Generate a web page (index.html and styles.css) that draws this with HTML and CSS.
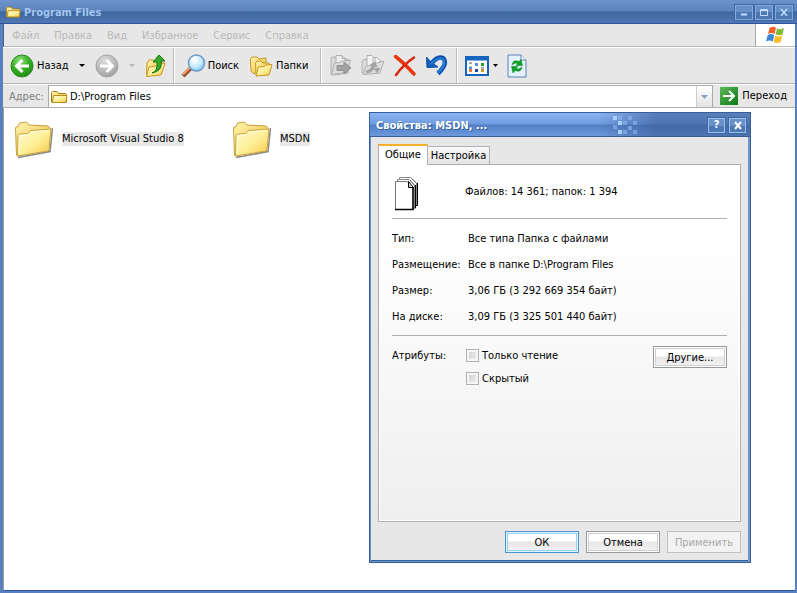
FILE: index.html
```html
<!DOCTYPE html>
<html lang="ru">
<head>
<meta charset="utf-8">
<title>Program Files</title>
<link rel="stylesheet" href="styles.css">
</head>
<body>
<svg class="defs" aria-hidden="true">
  <defs>
    <linearGradient id="gold" x1="0" y1="0" x2="1" y2="1"><stop offset="0" stop-color="#fffbd0"/><stop offset=".5" stop-color="#fff09a"/><stop offset="1" stop-color="#f2c846"/></linearGradient>
    <linearGradient id="goldBack" x1="0" y1="0" x2="1" y2="1"><stop offset="0" stop-color="#fff6b0"/><stop offset="1" stop-color="#e8b838"/></linearGradient>
    <radialGradient id="green" cx=".4" cy=".25" r=".8"><stop offset="0" stop-color="#8fe07a"/><stop offset=".5" stop-color="#3cb028"/><stop offset="1" stop-color="#1c8a14"/></radialGradient>
    <radialGradient id="grey" cx=".4" cy=".25" r=".8"><stop offset="0" stop-color="#dcdcdc"/><stop offset=".6" stop-color="#b8b8b8"/><stop offset="1" stop-color="#a0a0a0"/></radialGradient>
    <radialGradient id="lens" cx=".4" cy=".35" r=".7"><stop offset="0" stop-color="#fff"/><stop offset=".6" stop-color="#c4e8fc"/><stop offset="1" stop-color="#7cbcf0"/></radialGradient>
    <linearGradient id="goGreen" x1="0" y1="0" x2="1" y2="1"><stop offset="0" stop-color="#5cb85a"/><stop offset="1" stop-color="#0c7814"/></linearGradient>
    <symbol id="folder" viewBox="0 0 18 14">
      <path d="M1.500 12V2.500L2.500 1.500H7L8.500 3.500H15.500L16.500 4.500V12.500H2Z" fill="url(#goldBack)" stroke="#a87c14"/>
      <path d="M2.500 12.500L3.500 5.500H17L16 12.500Z" fill="url(#gold)" stroke="#b88c20"/>
    </symbol>
    <symbol id="bigfolder" viewBox="0 0 38 38">
      <path d="M3 36.500L35 30.500L37.500 7" fill="none" stroke="#555" stroke-width="1.500" opacity=".7"/>
      <path d="M1.500 34L.5 6.500L3 5.500L4.500 2L11.500 1L14 4L33 5L35.500 7.500L33 29L2.500 35Z" fill="url(#goldBack)" stroke="#c8a040"/>
      <path d="M2.500 35L3 14.500L4.500 13L12.500 12.500L16 9.500L36 8L34 29L33 30Z" fill="url(#gold)" stroke="#cca43c"/>
      <path d="M4 33L4.500 14.500L13 14L16.500 11L34 9.500" fill="none" stroke="#fffce0"/>
    </symbol>
  </defs>
</svg>
<div class="window">
  <header class="titlebar">
    <svg class="title-icon" viewBox="0 0 18 14"><use href="#folder"/></svg>
    <h1>Program Files</h1>
    <button class="caption-button" aria-label="Свернуть"><svg viewBox="0 0 16 13"><path d="M5 8.500H11" stroke="#c4dcff" stroke-width="2"/></svg></button>
    <button class="caption-button" aria-label="Развернуть"><svg viewBox="0 0 16 13"><path d="M5 3.500H11.500V9.500H4.500V3.500M4 4.500H12" stroke="#c4dcff" fill="none"/></svg></button>
    <button class="caption-button" aria-label="Закрыть"><svg viewBox="0 0 16 13"><path d="M5 3L11 10M11 3L5 10" stroke="#c4dcff" stroke-width="1.500"/></svg></button>
  </header>
  <nav class="menubar">
    <button>Файл</button><button>Правка</button><button>Вид</button><button>Избранное</button><button>Сервис</button><button>Справка</button>
    <div class="brand"><svg width="20" height="20" viewBox="0 0 20 20">
      <path d="M3.500 3Q7 .5 10 2.800L8.500 9Q5.500 7 2 9Z" fill="#f0642c"/><path d="M11 3.500Q14.500 5 18 3L16.500 9.500Q13 11 9.500 9.500Z" fill="#80bc34"/>
      <path d="M1.700 10Q5 8 8.200 10L6.800 16.500Q3.500 14.500 0 16.500Z" fill="#3c84d4"/><path d="M9.200 10.600Q13 12.400 16.200 10.600L14.600 17Q11 19 7.700 17Z" fill="#f8bc28"/>
    </svg></div>
  </nav>
  <div class="toolbar">
    <button class="tool"><svg width="24" height="24" viewBox="0 0 24 24"><circle cx="12" cy="12" r="11" fill="url(#green)" stroke="#2c8a24"/><path d="M19 12H7M12.500 6L6.500 12L12.500 18" fill="none" stroke="#fff" stroke-width="3"/></svg><span>Назад</span></button>
    <button class="drop" aria-label="История назад"><svg width="6" height="3" viewBox="0 0 6 3"><path d="M0 0H6L3 3Z" fill="#000"/></svg></button>
    <button class="tool" aria-label="Вперед" disabled><svg width="24" height="24" viewBox="0 0 24 24"><circle cx="12" cy="12" r="11" fill="url(#grey)" stroke="#a4a4a4"/><path d="M5 12H17M11.500 6L17.500 12L11.500 18" fill="none" stroke="#fff" stroke-width="3"/></svg></button>
    <button class="drop" aria-label="История вперед" disabled><svg width="6" height="3" viewBox="0 0 6 3"><path d="M0 0H6L3 3Z" fill="#b8b8b8"/></svg></button>
    <button class="tool" aria-label="Вверх"><svg width="21" height="24" viewBox="0 0 21 24"><path d="M1.500 22L2 9L4 6H8L10 8L17 6.500V18Z" fill="url(#goldBack)" stroke="#c89820"/><path d="M1.500 22.500L4 13L11 12L13 10L20 9L16 21Z" fill="url(#gold)" stroke="#c89820"/><path d="M7 19Q13 17 12 8H8L14 1L20 7H16Q18 17 7 19Z" fill="#38a828" stroke="#187818"/></svg></button>
    <i class="separator"></i>
    <button class="tool search"><svg width="25" height="24" viewBox="0 0 25 24"><path d="M2 22L10 14" stroke="#945030" stroke-width="4"/><path d="M2 20.500L9 13.500" stroke="#f0a070" stroke-width="2"/><circle cx="15.500" cy="9" r="8" fill="url(#lens)" stroke="#6c9ccc" stroke-width="1.500"/><path d="M10 8Q11 4 15 3.500" fill="none" stroke="#fff" stroke-width="2"/></svg><span>Поиск</span></button>
    <button class="tool folders"><svg width="24" height="24" viewBox="0 0 24 24"><path d="M2 17L1.500 5L3 3H8L10 5L17 4V9L5 20Z" fill="url(#goldBack)" stroke="#c89820"/><path d="M7 21L6.500 9L8 7H12L14 9H20V20Z" fill="url(#goldBack)" stroke="#c89820"/><path d="M7 22L9.500 13L15 12.500L17 11L23 10.500L20 21Z" fill="url(#gold)" stroke="#c89820"/></svg><span>Папки</span></button>
    <i class="separator edit-separator"></i>
    <button class="tool" aria-label="Переместить" disabled><svg width="22" height="24" viewBox="0 0 22 24"><path d="M1 20.500V4L2 3H5L7 5H18V19L4 21Z" fill="#d8d8d8" stroke="#b0b0b0"/><path d="M6 1.500H12L15 4.500V16H6Z" fill="#efefef" stroke="#b0b0b0"/><path d="M12 1.500V4.500H15" fill="none" stroke="#b0b0b0"/><path d="M1.500 20.500L4.500 9L10 8.500L12 7L20.500 6L17 18.500Z" fill="#dcdcdc" stroke="#b0b0b0"/><path d="M7 11.500H14V8L21 14L14 20V16.500H7Z" fill="#a2a2a2" stroke="#909090"/></svg></button>
    <button class="tool copy" aria-label="Копировать" disabled><svg width="24" height="24" viewBox="0 0 24 24"><path d="M1 19V7L3 5.500H7L9 7H20L18 19Z" fill="#dadada" stroke="#b0b0b0"/><path d="M6 1.500H11L14 4.500V14H6ZM12 3.500H16L19 6.500V15H12Z" fill="#f2f2f2" stroke="#b0b0b0"/><path d="M2 20.500L5 12L10 11.500L12 10L23 7L19 19Z" fill="#dedede" stroke="#b0b0b0"/><path d="M5 17Q10 16 11 12L9 11L14 8L16 13L14 12.500Q12 18 6 19ZM13 15L19 14L16 19" fill="#a4a4a4" stroke="#999" stroke-width=".6"/></svg></button>
    <button class="tool delete" aria-label="Удалить"><svg width="24" height="24" viewBox="0 0 24 24"><path d="M2.500 2.500Q11 9 21 20" fill="none" stroke="#e83810" stroke-width="3.500" stroke-linecap="round"/><path d="M21 3.500Q10 11 3 21" fill="none" stroke="#d8280c" stroke-width="2.500" stroke-linecap="round"/></svg></button>
    <button class="tool undo" aria-label="Отменить"><svg width="24" height="24" viewBox="0 0 24 24"><path d="M6 10Q13 1 18.500 4.500Q23 10 13 19.500" fill="none" stroke="#0c50ac" stroke-width="4.500"/><path d="M1.500 3L2 13.500L13 13L9.500 10.500L5 7Z" fill="#1260bc" stroke="#0c50ac"/><path d="M6 10Q13 2 18 5Q22 10 13 19" fill="none" stroke="#2480d8" stroke-width="2"/></svg></button>
    <i class="separator"></i>
    <button class="tool" aria-label="Вид"><svg width="24" height="20" viewBox="0 0 24 20"><rect x="1" y="1" width="22" height="18" fill="#fff" stroke="#1464c0" stroke-width="2"/><path d="M1 2.500H23" stroke="#1464c0" stroke-width="4"/><path d="M4 7H7M16 12H19" stroke="#a8a8a8" stroke-width="2"/><path d="M10 8.500H13M4 12H7" stroke="#5c90d8" stroke-width="3"/><path d="M16 8.500H19" stroke="#24a030" stroke-width="3"/><path d="M4 14.500H7" stroke="#f07840" stroke-width="3"/><path d="M10 14.500H13" stroke="#1848a8" stroke-width="3"/><path d="M16 14.500H19" stroke="#c0a020" stroke-width="3"/></svg></button>
    <button class="drop view-drop" aria-label="Варианты вида"><svg width="5" height="3" viewBox="0 0 5 3"><path d="M0 0H5L2.500 3Z" fill="#000"/></svg></button>
    <button class="tool" aria-label="Обновить"><svg width="20" height="24" viewBox="0 0 20 24"><path d="M1 1H14L19 6V23H1Z" fill="#e4f2ff" stroke="#5c80b4"/><path d="M14 1V6H19" fill="#fff" stroke="#5c80b4"/><path d="M5 11Q6 5 12 7.500L14 5.500L15.500 11.500H9L11 9.500Q8 8 5 11ZM15 13Q14 19 8 16.500L6 19L4.500 12.500H11L9 14.500Q12 16 15 13Z" fill="#0ca020" stroke="#088418" stroke-width=".5"/></svg></button>
  </div>
  <div class="address">
    <label for="path">Адрес:</label>
    <div class="combo">
      <svg width="18" height="14" viewBox="0 0 18 14"><use href="#folder"/></svg>
      <input id="path" type="text" value="D:\Program Files">
      <button aria-label="Список адресов"><svg width="7" height="4" viewBox="0 0 7 4"><path d="M0 0H7L3.500 4Z" fill="#88a4bc"/></svg></button>
    </div>
    <button class="go"><svg width="18" height="18" viewBox="0 0 18 18"><rect width="18" height="18" fill="url(#goGreen)"/><path d="M3 9H14M9 4L14 9L9 14" fill="none" stroke="#fff" stroke-width="2"/></svg><span>Переход</span></button>
  </div>
  <main class="content">
    <a class="item" href="#vs"><svg width="38" height="38" viewBox="0 0 38 38"><use href="#bigfolder"/></svg><span>Microsoft Visual Studio 8</span></a>
    <a class="item" href="#msdn"><svg width="38" height="38" viewBox="0 0 38 38"><use href="#bigfolder"/></svg><span>MSDN</span></a>
  </main>
</div>

<section class="dialog" role="dialog" aria-labelledby="dialog-title">
  <header class="dialog-title">
    <h2 id="dialog-title">Свойства: MSDN, ...</h2>
    <svg class="pixels" width="25" height="20" viewBox="0 0 25 20"><path d="M0 1h4v4h-4zM5 6h4v4h-4zM5 15h4v4h-4z" fill="#a8d0ff"/><path d="M5 1h4v4h-4zM15 1h4v4h-4zM10 6h4v4h-4zM20 6h4v4h-4zM0 10h4v4h-4zM15 11h4v4h-4zM10 15h4v4h-4zM20 15h4v4h-4z" fill="#8cb4ec" opacity=".65"/></svg>
    <button class="caption-button" aria-label="Справка"><b>?</b></button>
    <button class="caption-button" aria-label="Закрыть"><svg viewBox="0 0 16 13"><path d="M5 3L11 10M11 3L5 10" stroke="#fff" stroke-width="2"/></svg></button>
  </header>
  <div class="dialog-body">
    <div class="tabs" role="tablist">
      <button class="tab active" role="tab" aria-selected="true">Общие</button>
      <button class="tab" role="tab" aria-selected="false">Настройка</button>
    </div>
    <div class="panel" role="tabpanel">
      <div class="summary">
        <svg width="26" height="34" viewBox="0 0 26 34"><path d="M5.500 29V.5H16.500L22.500 6V28.500" fill="#fff" stroke="#888"/><path d="M23.500 6V28.500H21" fill="none" stroke="#000"/><path d="M3.500 31V2.500H15L20.500 8V30.500" fill="#fff" stroke="#888"/><path d="M21.500 8V31H19" fill="none" stroke="#000"/><path d="M1.500 32.500V4.500H13L19 11V32.500Z" fill="#fff" stroke="#777"/><path d="M19 10V32.500H1" fill="none" stroke="#000" stroke-width="1.500"/><path d="M14.500 4.500V10.500H19.500Z" fill="#ccc" stroke="#000"/><path d="M16 3L21 9M18 1.500L23 7" stroke="#777"/></svg>
        <span>Файлов: 14 361; папок: 1 394</span>
      </div>
      <dl class="facts">
        <dt>Тип:</dt><dd>Все типа Папка с файлами</dd>
        <dt>Размещение:</dt><dd>Все в папке D:\Program Files</dd>
        <dt>Размер:</dt><dd>3,06 ГБ (3 292 669 354 байт)</dd>
        <dt>На диске:</dt><dd>3,09 ГБ (3 325 501 440 байт)</dd>
      </dl>
      <div class="attributes">
        <span class="attributes-label">Атрибуты:</span>
        <div class="checks">
          <label><input type="checkbox"><span>Только чтение</span></label>
          <label><input type="checkbox"><span>Скрытый</span></label>
        </div>
        <button class="push">Другие...</button>
      </div>
    </div>
    <footer class="actions">
      <button class="push primary">ОК</button>
      <button class="push">Отмена</button>
      <button class="push" disabled>Применить</button>
    </footer>
  </div>
</section>
</body>
</html>
```
FILE: styles.css
```css
* { box-sizing: border-box; }
body {
  margin: 0;
  font: 11px/14px "DejaVu Sans Condensed", "DejaVu Sans", sans-serif;
  color: #000;
}
button, input { font: inherit; color: inherit; }
button { margin: 0; padding: 0; border: 0; background: none; white-space: nowrap; }
svg { display: block; flex: none; }
.defs { position: absolute; width: 0; height: 0; }
h1, h2 { margin: 0; flex: 1; font-size: 11px; line-height: 14px; font-family: "DejaVu Sans Condensed", "DejaVu Sans", sans-serif; }

.window {
  min-height: 100vh;
  display: flex;
  flex-direction: column;
  border: solid #5880c0;
  border-width: 0 2px 2px 3px;
  background: #fff;
}
.titlebar {
  display: flex;
  align-items: center;
  gap: 2px;
  height: 24px;
  margin: 0 -2px 0 -3px;
  padding: 0 4px 0 5px;
  background: linear-gradient(#6c94cc, #5a82bc 11px, #3c669f 12px, #5078b4 23px, #2c559c 23px);
}
.title-icon { width: 16px; height: 14px; }
.titlebar h1 { padding: 2px 0 0 1px; color: #a4c4f0; }
.caption-button {
  display: flex;
  align-items: center;
  justify-content: center;
  width: 18px;
  height: 15px;
  border: 1px solid #a0c0ec;
  outline: 1px solid #3c68a8;
  background: linear-gradient(#6890c8 50%, #4c78b4 50%);
  color: #fff;
}
.titlebar .caption-button { border-color: #86a8d8; }
.caption-button svg { width: 16px; height: 13px; }

.menubar {
  display: flex;
  align-items: center;
  gap: 15px;
  height: 23px;
  padding-left: 8px;
  border-left: 1px solid #44608c;
  border-bottom: 1px solid #b8b8b8;
  background: #e7e7e7;
  color: #b9b9b9;
}
.menubar button { padding-top: 2px; }
.brand {
  display: flex;
  align-items: center;
  justify-content: center;
  align-self: stretch;
  width: 40px;
  margin-left: auto;
  border-left: 1px solid #a8a8a8;
  background: #fff;
}
.toolbar {
  display: flex;
  align-items: center;
  height: 37px;
  padding-left: 7px;
  border-top: 1px solid #fff;
  border-bottom: 1px solid #b4b4b4;
  background: #e7e7e7;
}
.tool { display: flex; align-items: center; gap: 3px; }
.drop { display: flex; justify-content: center; width: 26px; }
.separator { align-self: stretch; width: 2px; margin: 0 7px; border-left: 1px solid #bbb; border-right: 1px solid #fff; }
.search { margin-left: -1px; gap: 2px; }
.folders { margin-left: 10px; }
.edit-separator { margin: 0 8px 0 12px; }
.copy { margin-left: 9px; }
.delete, .undo { margin-left: 8px; }
.view-drop { width: 18px; padding-right: 5px; }

.address {
  display: flex;
  align-items: center;
  height: 24px;
  border-top: 1px solid #fff;
  border-bottom: 1px solid #b0b0b0;
  background: #e7e7e7;
}
.address label { width: 45px; padding: 1px 0 0 6px; color: #808080; }
.combo { display: flex; flex: 1; align-items: center; align-self: stretch; min-width: 0; border: 1px solid #aaa; border-width: 1px 1px 0; background: #fff; }
.combo svg { margin-left: 1px; }
.combo input { flex: 1; min-width: 0; padding: 1px 2px 0; border: 0; outline: 0; background: none; }
.combo button { display: flex; align-items: center; justify-content: center; align-self: stretch; width: 16px; border-left: 1px solid #ccc; background: linear-gradient(#fff, #e4e4e4); }
.combo button svg { margin: 0; }
.go { display: flex; align-items: center; gap: 4px; padding: 0 8px 0 7px; }

.content { display: flex; flex: 1; align-items: flex-start; padding: 13px 11px; border-left: 1px solid #a0a0a0; border-bottom: 1px solid #2c559c; }
.item { display: flex; align-items: center; gap: 9px; width: 218px; color: #000; text-decoration: none; }
.item span { margin-bottom: 2px; background: #e9e9e9; }

.dialog {
  position: absolute;
  left: 369px;
  top: 112px;
  width: 382px;
  border: 1px solid #345f9c;
  background: #6c94cc;
}
.dialog-title {
  display: flex;
  align-items: center;
  gap: 4px;
  height: 24px;
  padding: 0 4px 0 6px;
  background:
    linear-gradient(90deg, transparent 60%, rgb(56 92 148 / 60%) 75%),
    linear-gradient(#8cb4f0, #6e9ce0 11px, #527fc4 12px, #6c98dc 23px, #345f9c 23px);
}
.dialog-title h2 { padding-top: 1px; color: #fff; text-shadow: 1px 1px #345f9c; }
.dialog .caption-button { width: 17px; }
.pixels { margin-right: 66px; }
.dialog-body { margin: 0 2px 1px 1px; padding: 7px; border-bottom: 1px solid #345f9c; background: #e7e7e7; }
.tabs { display: flex; align-items: flex-end; height: 20px; }
.tab { height: 18px; padding: 1px 3px 0; border: 1px solid #b0b0b8; border-width: 1px 1px 0 0; background: linear-gradient(#f8f8f8, #e4e4e4); }
.tab.active { position: relative; z-index: 1; height: 21px; margin-bottom: -1px; padding: 0 6px 1px; border: solid #b0b0b8; border-width: 2px 1px 0; border-top-color: #f8ac30; background: #fff; }
.panel {
  min-height: 358px;
  padding: 12px 13px;
  border: 1px solid #acacb4;
  box-shadow: inset 0 0 0 1px #fff;
  background: linear-gradient(#fff 20%, #efefef);
}
.summary { display: flex; align-items: center; gap: 45px; height: 42px; padding: 0 0 8px 2px; border-bottom: 1px solid #b0b0b0; }
.summary span { margin-bottom: 4px; }
.facts { display: grid; grid-template-columns: 76px 1fr; gap: 12px 0; margin: 0; padding: 13px 0 11px; border-bottom: 1px solid #b0b0b0; }
.facts dd { margin: 0; }
.attributes { display: flex; align-items: flex-start; padding-top: 10px; }
.attributes-label { width: 74px; padding-top: 3px; }
.checks { display: grid; gap: 8px; flex: 1; padding-top: 2px; }
.checks label { display: flex; align-items: center; gap: 3px; }
.checks span { padding-top: 1px; }
.checks input { appearance: none; width: 13px; height: 13px; margin: 0; border: 1px solid #b0b0b0; box-shadow: inset 0 0 0 2px #f6f6f6; background: linear-gradient(135deg, #ccc, #f4f4f4); }
.checks input:checked { background: #5880c0; }
.push { width: 74px; height: 22px; padding-top: 1px; border: 1px solid #989898; box-shadow: inset 0 0 0 1px #fff, inset 0 0 0 2px #d0d0d0; background: linear-gradient(#fff 45%, #e6e6e6 50%, #f4f4f4); }
.push.primary { border-color: #4c94cc; box-shadow: inset 0 0 0 1px #e0f4ff, inset 0 0 0 2px #90d4fc; }
.push:disabled { border-color: #c0c0c0; box-shadow: none; background: #f2f2f2; color: #a8a8a8; }
.actions { display: flex; justify-content: flex-end; gap: 7px; padding-top: 9px; }
```
